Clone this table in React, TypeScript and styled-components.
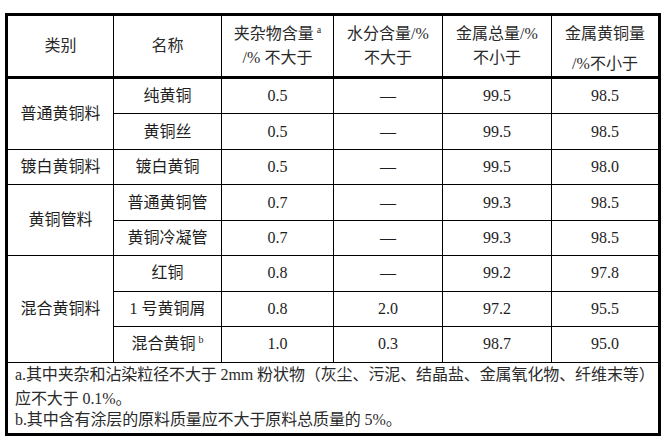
import styled, { createGlobalStyle } from 'styled-components'

const GlobalStyle = createGlobalStyle`
  html, body {
    margin: 0;
    padding: 0;
    background: #ffffff;
  }
  body {
    font-family: "Liberation Serif", "Noto Sans CJK SC", serif;
    color: #222;
  }
`

const Page = styled.div`
  padding: 13px 0 0 5px;
  width: 668px;
  height: 440px;
  box-sizing: border-box;
  overflow: hidden;
`

const Table = styled.table`
  box-sizing: border-box;
  width: 656px;
  table-layout: fixed;
  border-collapse: separate;
  border-spacing: 0;
  border: 3px solid #000;
  font-size: 16px;
`

const Th = styled.th<{ $last?: boolean }>`
  box-sizing: border-box;
  height: 61px;
  padding: 0;
  font-weight: normal;
  text-align: center;
  vertical-align: middle;
  line-height: 24px;
  color: #2a2a2a;
  border-bottom: 3px solid #000;
  border-right: ${p => (p.$last ? 'none' : '1px solid #000')};
`

const Td = styled.td<{ $last?: boolean }>`
  box-sizing: border-box;
  height: 35.45px;
  padding: 0;
  text-align: center;
  vertical-align: middle;
  line-height: 20px;
  color: #1e1e1e;
  border-bottom: 1px solid #000;
  border-right: ${p => (p.$last ? 'none' : '1px solid #000')};
`

const Line = styled.span<{ $gap?: number }>`
  display: block;
  padding-top: ${p => p.$gap ?? 0}px;
`

const Sup = styled.span`
  font-size: 10px;
  line-height: 0;
  vertical-align: 6px;
  margin-left: 3px;
`

const NoteCell = styled.td`
  box-sizing: border-box;
  height: 69px;
  padding: 0 0 4px 7px;
  text-align: left;
  vertical-align: top;
  color: #2a2a2a;
  overflow: hidden;
`

const Note = styled.div<{ $lh: number }>`
  line-height: ${p => p.$lh}px;
  white-space: nowrap;
  letter-spacing: -0.1px;
`

type Row = { group?: string; span?: number; name: string; sup?: string; vals: string[] }

const rows: Row[] = [
  { group: '普通黄铜料', span: 2, name: '纯黄铜', vals: ['0.5', '—', '99.5', '98.5'] },
  { name: '黄铜丝', vals: ['0.5', '—', '99.5', '98.5'] },
  { group: '镀白黄铜料', span: 1, name: '镀白黄铜', vals: ['0.5', '—', '99.5', '98.0'] },
  { group: '黄铜管料', span: 2, name: '普通黄铜管', vals: ['0.7', '—', '99.3', '98.5'] },
  { name: '黄铜冷凝管', vals: ['0.7', '—', '99.3', '98.5'] },
  { group: '混合黄铜料', span: 3, name: '红铜', vals: ['0.8', '—', '99.2', '97.8'] },
  { name: '1 号黄铜屑', vals: ['0.8', '2.0', '97.2', '95.5'] },
  { name: '混合黄铜', sup: 'b', vals: ['1.0', '0.3', '98.7', '95.0'] },
]

const widths = [106, 108, 112, 109, 109, 106]

export default function App() {
  return (
    <Page>
      <GlobalStyle />
      <Table>
        <colgroup>
          {widths.map((w, i) => (
            <col key={i} style={{ width: w }} />
          ))}
        </colgroup>
        <thead>
          <tr>
            <Th>类别</Th>
            <Th>名称</Th>
            <Th>
              <Line>
                夹杂物含量<Sup>a</Sup>
              </Line>
              <Line>/% 不大于</Line>
            </Th>
            <Th>
              <Line>水分含量/%</Line>
              <Line>不大于</Line>
            </Th>
            <Th>
              <Line>金属总量/%</Line>
              <Line>不小于</Line>
            </Th>
            <Th $last>
              <Line $gap={6}>金属黄铜量</Line>
              <Line $gap={6}>/%不小于</Line>
            </Th>
          </tr>
        </thead>
        <tbody>
          {rows.map((r, i) => (
            <tr key={i}>
              {r.group && <Td rowSpan={r.span}>{r.group}</Td>}
              <Td>
                {r.name}
                {r.sup && <Sup>{r.sup}</Sup>}
              </Td>
              {r.vals.map((v, j) => (
                <Td key={j} $last={j === r.vals.length - 1}>
                  {v}
                </Td>
              ))}
            </tr>
          ))}
          <tr>
            <NoteCell colSpan={6}>
              <Note $lh={24}>
                a.其中夹杂和沾染粒径不大于 2mm 粉状物（灰尘、污泥、结晶盐、金属氧化物、纤维末等）
                <br />
                应不大于 0.1%。
              </Note>
              <Note $lh={18}>b.其中含有涂层的原料质量应不大于原料总质量的 5%。</Note>
            </NoteCell>
          </tr>
        </tbody>
      </Table>
    </Page>
  )
}
